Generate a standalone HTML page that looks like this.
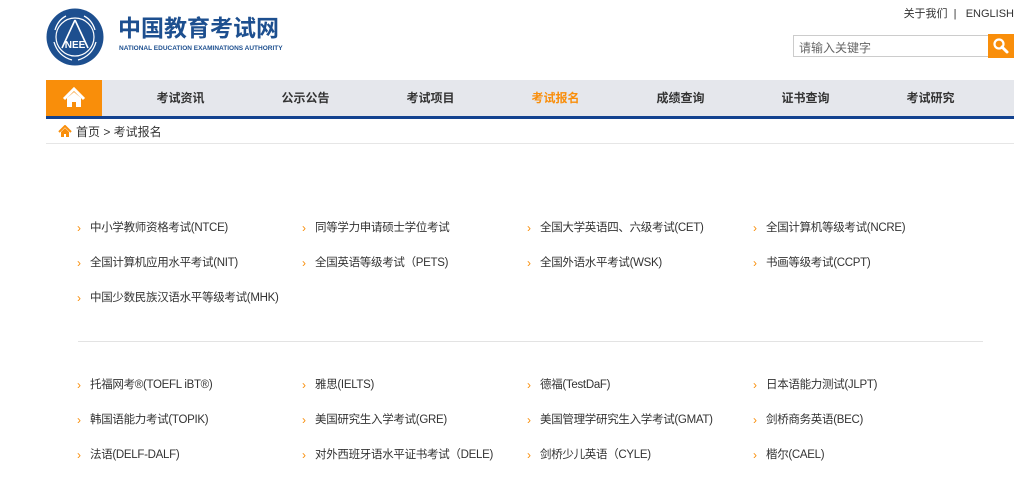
<!DOCTYPE html>
<html><head><meta charset="utf-8"><style>
*{margin:0;padding:0;box-sizing:border-box}
body{width:1024px;height:501px;background:#fff;font-family:"Liberation Sans","Noto Sans CJK SC",sans-serif;color:#333;position:relative;overflow:hidden}
.a{position:absolute}
.top{right:10px;top:5px;font-size:11px;color:#333}
.search{left:793px;top:35px;width:196px;height:22px;border:1px solid #ccc;border-right:none;font-size:12px;color:#666;padding:3px 5px}
.sbtn{left:988px;top:34px;width:26px;height:24px;background:#f98e0a}
.nav{left:46px;top:80px;width:968px;height:36px;background:#e5e7ec}
.navline{left:46px;top:116px;width:968px;height:3px;background:#12428f}
.home{left:46px;top:80px;width:56px;height:36px;background:#f98e0a}
.ni{top:80px;height:36px;line-height:36px;font-size:12px;font-weight:bold;color:#333;width:125px;text-align:center}
.bc{left:76px;top:124px;font-size:12px;line-height:16px}
.hr1{left:46px;top:143px;width:968px;height:1px;background:#e6e6e6}
.it{font-size:11.5px;line-height:14px;color:#333;letter-spacing:-0.3px;white-space:nowrap}
.it:before{content:"›";color:#f98e0a;position:absolute;left:-13px;top:0;font-size:12px}
.hr2{left:78px;top:341px;width:905px;height:1px;background:#e3e3e3}
</style></head><body>
<svg class="a" style="left:46px;top:8px" width="58" height="58" viewBox="0 0 58 58">
<circle cx="29" cy="29" r="28.5" fill="#1d4f8f"/>
<circle cx="29" cy="29" r="19" fill="#1d4f8f" stroke="#fff" stroke-width="1.2"/>
<g fill="none" stroke="#fff" stroke-width="1.3"><path d="M8 34 Q12 48 26 52"/><path d="M50 34 Q46 48 32 52"/><path d="M9 22 Q12 12 20 8"/><path d="M49 22 Q46 12 38 8"/></g>
<path d="M29 12 L16 40 M29 12 L42 40" stroke="#fff" stroke-width="1.6" fill="none"/>
<text x="29" y="40" fill="#fff" font-size="10" font-weight="bold" text-anchor="middle" font-family="Liberation Sans">NEE</text>
</svg>
<div class="a" style="left:118px;top:15px;font-size:23px;line-height:26px;font-weight:bold;color:#1d4f8f">中国教育考试网</div>
<div class="a" style="left:119px;top:45px;font-size:6.5px;font-weight:bold;color:#1d4f8f">NATIONAL EDUCATION EXAMINATIONS AUTHORITY</div>
<div class="a top">关于我们 &nbsp;| &nbsp; ENGLISH</div>
<div class="a search">请输入关键字</div>
<div class="a sbtn"><svg width="26" height="24"><circle cx="11" cy="10" r="4.5" fill="none" stroke="#fff" stroke-width="2.2"/><path d="M14 13 L19 18" stroke="#fff" stroke-width="3" stroke-linecap="round"/></svg></div>
<div class="a nav"></div>
<div class="a home"><svg width="56" height="36"><path d="M18 19 L28 9 L38 19" fill="none" stroke="#fff" stroke-width="3"/><path d="M21 18 V27 H26 V22 H30 V27 H35 V18 L28 12 Z" fill="#fff"/></svg></div>
<div class="a navline"></div>
<div class="a ni" style="left:118px">考试资讯</div>
<div class="a ni" style="left:243px">公示公告</div>
<div class="a ni" style="left:368px">考试项目</div>
<div class="a ni" style="left:493px;color:#f98e0a">考试报名</div>
<div class="a ni" style="left:618px">成绩查询</div>
<div class="a ni" style="left:743px">证书查询</div>
<div class="a ni" style="left:868px">考试研究</div>
<svg class="a" style="left:58px;top:125px" width="14" height="13"><path d="M1 7 L7 1 L13 7" fill="none" stroke="#f98e0a" stroke-width="2"/><path d="M3 7 V12 H6 V9 H8 V12 H11 V7 L7 3 Z" fill="#f98e0a"/></svg>
<div class="a bc">首页 &gt; 考试报名</div>
<div class="a hr1"></div>

<div class="a it" style="left:90px;top:221px">中小学教师资格考试(NTCE)</div>
<div class="a it" style="left:315px;top:221px">同等学力申请硕士学位考试</div>
<div class="a it" style="left:540px;top:221px">全国大学英语四、六级考试(CET)</div>
<div class="a it" style="left:766px;top:221px">全国计算机等级考试(NCRE)</div>
<div class="a it" style="left:90px;top:256px">全国计算机应用水平考试(NIT)</div>
<div class="a it" style="left:315px;top:256px">全国英语等级考试（PETS)</div>
<div class="a it" style="left:540px;top:256px">全国外语水平考试(WSK)</div>
<div class="a it" style="left:766px;top:256px">书画等级考试(CCPT)</div>
<div class="a it" style="left:90px;top:291px">中国少数民族汉语水平等级考试(MHK)</div>
<div class="a hr2"></div>
<div class="a it" style="left:90px;top:378px">托福网考®(TOEFL iBT®)</div>
<div class="a it" style="left:315px;top:378px">雅思(IELTS)</div>
<div class="a it" style="left:540px;top:378px">德福(TestDaF)</div>
<div class="a it" style="left:766px;top:378px">日本语能力测试(JLPT)</div>
<div class="a it" style="left:90px;top:413px">韩国语能力考试(TOPIK)</div>
<div class="a it" style="left:315px;top:413px">美国研究生入学考试(GRE)</div>
<div class="a it" style="left:540px;top:413px">美国管理学研究生入学考试(GMAT)</div>
<div class="a it" style="left:766px;top:413px">剑桥商务英语(BEC)</div>
<div class="a it" style="left:90px;top:448px">法语(DELF-DALF)</div>
<div class="a it" style="left:315px;top:448px">对外西班牙语水平证书考试（DELE)</div>
<div class="a it" style="left:540px;top:448px">剑桥少儿英语（CYLE)</div>
<div class="a it" style="left:766px;top:448px">楷尔(CAEL)</div>
</body></html>
